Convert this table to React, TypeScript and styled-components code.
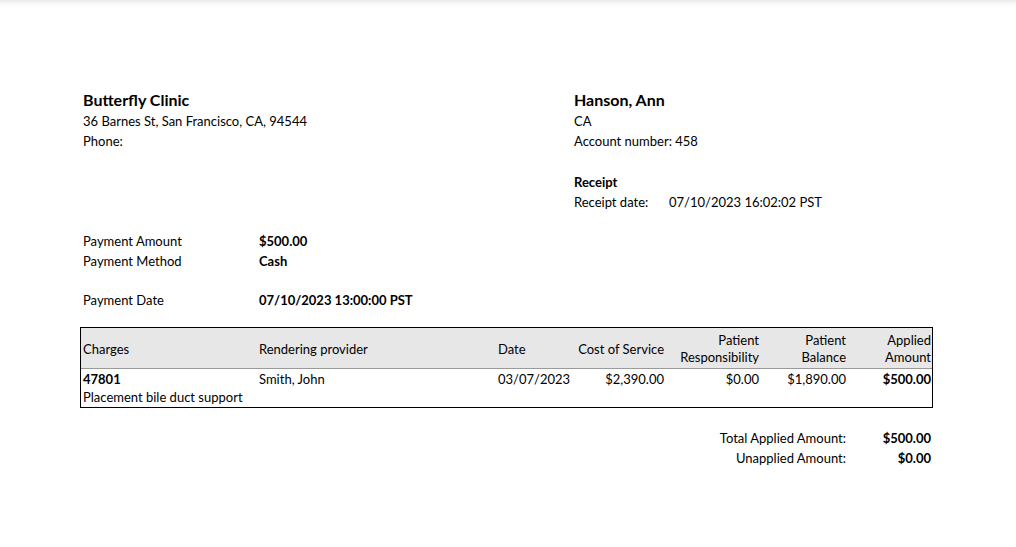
import React from "react";
import styled, { createGlobalStyle } from "styled-components";

const GlobalStyle = createGlobalStyle`
  html, body {
    margin: 0;
    padding: 0;
    background: #fff;
  }
  body {
    font-family: Lato, "Liberation Sans", sans-serif;
    font-size: 13px;
    color: #000;
  }
`;

type Charge = {
  code: string;
  description: string;
  provider: string;
  date: string;
  cost: string;
  responsibility: string;
  balance: string;
  applied: string;
};

const charges: Charge[] = [
  {
    code: "47801",
    description: "Placement bile duct support",
    provider: "Smith, John",
    date: "03/07/2023",
    cost: "$2,390.00",
    responsibility: "$0.00",
    balance: "$1,890.00",
    applied: "$500.00",
  },
];

export default function App() {
  return (
    <>
      <GlobalStyle />
      <Page>
        <Header>
          <Block>
            <Name>Butterfly Clinic</Name>
            <Line>36 Barnes St, San Francisco, CA, 94544</Line>
            <Line>Phone:</Line>
          </Block>
          <Block>
            <Name>Hanson, Ann</Name>
            <Line>CA</Line>
            <Line>Account number: 458</Line>
            <ReceiptTitle>Receipt</ReceiptTitle>
            <Pair $labelWidth={95}>
              <span>Receipt date:</span>
              <span>07/10/2023 16:02:02 PST</span>
            </Pair>
          </Block>
        </Header>

        <Payment>
          <Pair $labelWidth={176}>
            <span>Payment Amount</span>
            <Strong>$500.00</Strong>
          </Pair>
          <Pair $labelWidth={176}>
            <span>Payment Method</span>
            <Strong>Cash</Strong>
          </Pair>
          <Pair $labelWidth={176} $gapTop={19}>
            <span>Payment Date</span>
            <Strong>07/10/2023 13:00:00 PST</Strong>
          </Pair>
        </Payment>

        <Table>
          <HeadRow>
            <Cell>Charges</Cell>
            <Cell>Rendering provider</Cell>
            <Cell>Date</Cell>
            <Cell $right>Cost of Service</Cell>
            <Cell $right>
              Patient
              <br />
              Responsibility
            </Cell>
            <Cell $right>
              Patient
              <br />
              Balance
            </Cell>
            <Cell $right $last>
              Applied
              <br />
              Amount
            </Cell>
          </HeadRow>
          {charges.map((c) => (
            <BodyRow key={c.code}>
              <Cell>
                <Strong>{c.code}</Strong>
                <br />
                {c.description}
              </Cell>
              <Cell>{c.provider}</Cell>
              <Cell>{c.date}</Cell>
              <Cell $right>{c.cost}</Cell>
              <Cell $right>{c.responsibility}</Cell>
              <Cell $right>{c.balance}</Cell>
              <Cell $right $last>
                <Strong>{c.applied}</Strong>
              </Cell>
            </BodyRow>
          ))}
        </Table>

        <Totals>
          <TotalLabel>Total Applied Amount:</TotalLabel>
          <TotalValue>$500.00</TotalValue>
          <TotalLabel>Unapplied Amount:</TotalLabel>
          <TotalValue>$0.00</TotalValue>
        </Totals>
      </Page>
    </>
  );
}

const Page = styled.div`
  min-height: 547px;
  box-sizing: border-box;
  padding: 90px 0 40px 83px;
  background: linear-gradient(#e9e9e9 0px, #f7f7f7 3px, #fff 7px) no-repeat;
`;

const Header = styled.div`
  display: grid;
  grid-template-columns: 491px 1fr;
`;

const Block = styled.div`
  display: flex;
  flex-direction: column;
`;

const Name = styled.div`
  font-size: 16px;
  font-weight: 700;
  line-height: 19px;
  margin-bottom: 2px;
`;

const Line = styled.div`
  line-height: 20px;
`;

const ReceiptTitle = styled.div`
  font-weight: 700;
  line-height: 20px;
  margin-top: 21px;
`;

const Pair = styled.div<{ $labelWidth: number; $gapTop?: number }>`
  display: grid;
  grid-template-columns: ${(p) => p.$labelWidth}px auto;
  line-height: 20px;
  margin-top: ${(p) => p.$gapTop ?? 0}px;
`;

const Strong = styled.span`
  font-weight: 700;
`;

const Payment = styled.div`
  display: flex;
  flex-direction: column;
  margin-top: 19px;
`;

const Table = styled.div`
  width: 851px;
  margin: 17px 0 0 -3px;
  border: 1px solid #000;
`;

const columns = "176px 239px 74px 96px 95px 87px 84px";

const HeadRow = styled.div`
  display: grid;
  grid-template-columns: ${columns};
  height: 41px;
  box-sizing: border-box;
  padding-top: 2px;
  background: #e7e7e7;
  border-bottom: 1px solid #9a9a9a;
  align-items: center;
  line-height: 17px;
`;

const BodyRow = styled.div`
  display: grid;
  grid-template-columns: ${columns};
  align-items: start;
  line-height: 18px;
  padding: 1px 0 1px;
`;

const Cell = styled.div<{ $right?: boolean; $last?: boolean }>`
  padding: 0 ${(p) => (p.$last ? 1 : 2)}px 0 2px;
  text-align: ${(p) => (p.$right ? "right" : "left")};
  white-space: nowrap;
`;

const Totals = styled.div`
  display: grid;
  grid-template-columns: 1fr 85px;
  width: 853px;
  margin: 20px 0 0 -3px;
  line-height: 20px;
`;

const TotalLabel = styled.div`
  text-align: right;
  padding-right: 2px;
`;

const TotalValue = styled.div`
  text-align: right;
  padding-right: 2px;
  font-weight: 700;
`;
